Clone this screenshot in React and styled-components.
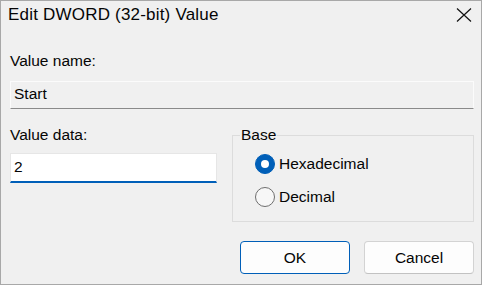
import React from 'react';
import styled, { createGlobalStyle } from 'styled-components';

const GlobalStyle = createGlobalStyle`
  html, body {
    margin: 0;
    padding: 0;
    background: #f0f0f0;
  }
  body {
    font-family: "Liberation Sans", Arial, sans-serif;
  }
`;

export default function App() {
  return (
    <>
      <GlobalStyle />
      <Window>
        <TitleBar>
          <Title>Edit DWORD (32-bit) Value</Title>
          <CloseButton aria-label="Close">
            <svg width="16" height="16" viewBox="0 0 16 16">
              <path d="M1 1.5 L15 14.5 M15 1.5 L1 14.5" stroke="#111" strokeWidth="1.2" fill="none" />
            </svg>
          </CloseButton>
        </TitleBar>

        <Body>
          <Label $top={22}>Value name:</Label>
          <NameBox>Start</NameBox>

          <MiddleRow>
            <div>
              <Label $top={0}>Value data:</Label>
              <DataBox>2</DataBox>
            </div>
            <Group>
              <legend>Base</legend>
              <RadioList>
                <RadioRow>
                  <Radio $checked />
                  Hexadecimal
                </RadioRow>
                <RadioRow>
                  <Radio />
                  Decimal
                </RadioRow>
              </RadioList>
            </Group>
          </MiddleRow>

          <ButtonRow>
            <Button $primary>OK</Button>
            <Button>Cancel</Button>
          </ButtonRow>
        </Body>
      </Window>
    </>
  );
}

const Window = styled.div`
  box-sizing: border-box;
  width: 482px;
  height: 285px;
  border: 1px solid #a8a8a8;
  background: #f0f0f0;
  display: flex;
  flex-direction: column;
  color: #050505;
  font-size: 15.5px;
  line-height: 20px;
`;

const TitleBar = styled.div`
  height: 28px;
  display: flex;
  align-items: center;
  justify-content: space-between;
  padding-left: 7px;
`;

const Title = styled.div`
  font-size: 17px;
  letter-spacing: 0.2px;
`;

const CloseButton = styled.div`
  width: 34px;
  height: 28px;
  display: flex;
  align-items: center;
  justify-content: center;
`;

const Body = styled.div`
  display: flex;
  flex-direction: column;
  padding: 0 7px 0 9px;
`;

const Label = styled.div`
  margin-top: ${(p) => p.$top}px;
`;

const NameBox = styled.div`
  box-sizing: border-box;
  margin-top: 10px;
  height: 28px;
  display: flex;
  align-items: center;
  padding: 0 3px 2px;
  background: #f0f0f0;
  border: 1px solid #fbfbfb;
  border-bottom-color: #8a8a8a;
`;

const MiddleRow = styled.div`
  margin-top: 16px;
  display: grid;
  grid-template-columns: 207px 1fr;
  column-gap: 15px;
  align-items: start;
`;

const DataBox = styled.div`
  box-sizing: border-box;
  margin-top: 8px;
  height: 30px;
  display: flex;
  align-items: center;
  padding: 0 3px 1px;
  background: #ffffff;
  border: 1px solid #e6e6e6;
  border-bottom: 2px solid #005fb8;
`;

const Group = styled.fieldset`
  margin: 0;
  min-width: 0;
  padding: 0 7px 8px 7px;
  border: 1px solid #dcdcdc;

  legend {
    padding: 0 1px;
    line-height: 20px;
  }
`;

const RadioList = styled.div`
  margin-top: 2px;
  display: flex;
  flex-direction: column;
`;

const RadioRow = styled.div`
  height: 33px;
  display: flex;
  align-items: center;
  gap: 4px;
  margin-left: 15px;
`;

const Radio = styled.span`
  box-sizing: border-box;
  width: 20px;
  height: 20px;
  border-radius: 50%;
  display: flex;
  align-items: center;
  justify-content: center;
  background: ${(p) => (p.$checked ? '#005fb8' : '#f7f7f7')};
  border: 1px solid ${(p) => (p.$checked ? '#005fb8' : '#6e6e6e')};

  &::after {
    content: '';
    display: ${(p) => (p.$checked ? 'block' : 'none')};
    width: 8px;
    height: 8px;
    border-radius: 50%;
    background: #ffffff;
  }
`;

const ButtonRow = styled.div`
  margin-top: 19px;
  display: flex;
  justify-content: flex-end;
  gap: 14px;
`;

const Button = styled.div`
  box-sizing: border-box;
  width: 110px;
  height: 33px;
  display: flex;
  align-items: center;
  justify-content: center;
  border-radius: 4px;
  background: #fdfdfd;
  border: 1px solid ${(p) => (p.$primary ? '#005fb8' : '#d3d3d3')};
  border-bottom-color: ${(p) => (p.$primary ? '#005fb8' : '#c2c2c2')};
`;
